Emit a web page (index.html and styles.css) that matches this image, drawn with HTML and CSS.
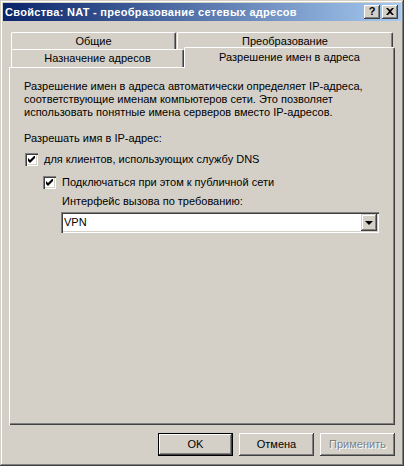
FILE: index.html
```html
<!DOCTYPE html>
<html lang="ru">
<head>
    <meta charset="UTF-8">
    <title>Свойства: NAT</title>
    <link rel="stylesheet" href="styles.css">
</head>
<body>
    <div class="window">
        <div class="titlebar">
            <span class="title">Свойства: NAT - преобразование сетевых адресов</span>
            <div class="caption-buttons">
                <div class="caption-btn help">?</div>
                <div class="caption-btn">
                    <svg width="8" height="7" viewBox="0 0 8 7">
                        <path d="M0 0h2l2 2 2-2h2L5 3.5 8 7H6L4 5 2 7H0l3-3.5z" fill="#000"/>
                    </svg>
                </div>
            </div>
        </div>

        <div class="content">
            <!-- two rows of tabs, the selected one sits in the front row -->
            <div class="tabs">
                <div class="tab-row back">
                    <div class="tab tab-general">Общие</div>
                    <div class="tab tab-translation">Преобразование</div>
                </div>
                <div class="tab-row front">
                    <div class="tab tab-assign">Назначение адресов</div>
                    <div class="tab tab-resolve active">Разрешение имен в адреса</div>
                </div>
            </div>

            <div class="panel">
                <p class="intro">Разрешение имен в адреса автоматически определяет IP-адреса,
                    соответствующие именам компьютеров сети. Это позволяет
                    использовать понятные имена серверов вместо IP-адресов.</p>

                <p class="caption">Разрешать имя в IP-адрес:</p>

                <label class="check first">
                    <span class="box"><svg width="7" height="7" viewBox="0 0 7 7"><path d="M0 2v3l2 2 5-5V-1L2 4z" fill="#000"/></svg></span>
                    для клиентов, использующих службу DNS
                </label>

                <div class="sub">
                    <label class="check">
                        <span class="box"><svg width="7" height="7" viewBox="0 0 7 7"><path d="M0 2v3l2 2 5-5V-1L2 4z" fill="#000"/></svg></span>
                        Подключаться при этом к публичной сети
                    </label>

                    <div class="field">
                        <div class="field-label">Интерфейс вызова по требованию:</div>
                        <div class="combo">
                            <span class="combo-value">VPN</span>
                            <span class="combo-btn"><span class="arrow"></span></span>
                        </div>
                    </div>
                </div>
            </div>

            <div class="buttons">
                <div class="btn default">OK</div>
                <div class="btn">Отмена</div>
                <div class="btn disabled">Применить</div>
            </div>
        </div>
    </div>
</body>
</html>
```

FILE: styles.css
```css
body {
    margin: 0;
    padding: 0;
    font-family: "Liberation Sans", Arial, sans-serif;
    font-size: 11px;
    line-height: 13px;
    color: #000;
    background: #d4d0c8;
}
.window {
    width: 404px;
    height: 466px;
    box-sizing: border-box;
    padding: 3px;
    background: #d4d0c8;
    box-shadow: inset -1px -1px #404040, inset 1px 1px #d4d0c8,
                inset -2px -2px #808080, inset 2px 2px #fff;
    display: flex;
    flex-direction: column;
}
.titlebar {
    height: 18px;
    display: flex;
    align-items: center;
    justify-content: space-between;
    padding-left: 2px;
    background: linear-gradient(to right, #0a246a, #a6caf0);
}
.title {
    color: #fff;
    font-weight: bold;
    font-size: 11px;
    letter-spacing: 0.3px;
}
.caption-buttons {
    display: flex;
    gap: 2px;
    margin-right: 3px;
}
.caption-btn {
    width: 16px;
    height: 14px;
    box-sizing: border-box;
    background: #d4d0c8;
    box-shadow: inset -1px -1px #404040, inset 1px 1px #fff,
                inset -2px -2px #808080, inset 2px 2px #d4d0c8;
    display: flex;
    align-items: center;
    justify-content: center;
    padding-bottom: 1px;
}
.help {
    font-weight: bold;
    font-size: 11px;
    line-height: 11px;
}
.content {
    flex: 1;
    padding: 0 3px 0 6px;
}
.tabs {
    margin-top: 11px;
    margin-left: 2px;
}
.tab-row {
    display: flex;
}
.tab-row.back {
    height: 17px;
}
.tab-row.front {
    height: 18px;
    align-items: flex-end;
}
.tab {
    box-sizing: border-box;
    height: 100%;
    border-top: 1px solid #fff;
    border-left: 1px solid #fff;
    border-right: 1px solid #404040;
    border-radius: 2px 2px 0 0;
    box-shadow: inset -1px 0 #808080;
    background: #d4d0c8;
    text-align: center;
    padding-top: 2px;
}
.tab-general {
    width: 165px;
    margin-right: 1px;
}
.tab-translation {
    width: 216px;
}
.tab-assign {
    width: 173px;
}
.tab-resolve {
    width: 211px;
}
.tab.active {
    position: relative;
    z-index: 1;
    height: 21px;
    margin-bottom: -1px;
    padding-top: 3px;
}
.panel {
    width: 386px;
    height: 358px;
    box-sizing: border-box;
    padding: 13px 0 0 15px;
    box-shadow: inset 1px 1px #fff, inset -1px -1px #404040, inset -2px -2px #808080;
}
.panel p {
    margin: 0;
}
.intro {
    width: 350px;
}
.caption {
    margin-top: 13px !important;
}
.check {
    display: flex;
    align-items: center;
    gap: 6px;
    height: 13px;
}
.check.first {
    margin-top: 8px;
    margin-left: 1px;
}
.box {
    width: 13px;
    height: 13px;
    box-sizing: border-box;
    background: #fff;
    box-shadow: inset 1px 1px #808080, inset 2px 2px #404040,
                inset -1px -1px #fff, inset -2px -2px #d4d0c8;
    display: flex;
    align-items: center;
    justify-content: center;
}
.sub {
    margin-top: 10px;
    margin-left: 19px;
}
.field {
    margin-top: 6px;
    padding-left: 19px;
}
.combo {
    margin-top: 4px;
    margin-left: -1px;
    width: 318px;
    height: 21px;
    box-sizing: border-box;
    padding: 2px;
    background: #fff;
    box-shadow: inset 1px 1px #808080, inset 2px 2px #404040,
                inset -1px -1px #fff, inset -2px -2px #d4d0c8;
    display: flex;
    align-items: center;
    justify-content: space-between;
}
.combo-value {
    padding-left: 1px;
}
.combo-btn {
    width: 16px;
    height: 17px;
    box-sizing: border-box;
    background: #d4d0c8;
    box-shadow: inset -1px -1px #404040, inset 1px 1px #d4d0c8,
                inset -2px -2px #808080, inset 2px 2px #fff;
    display: flex;
    align-items: center;
    justify-content: center;
}
.arrow {
    width: 0;
    height: 0;
    border-left: 4px solid transparent;
    border-right: 4px solid transparent;
    border-top: 4px solid #000;
    margin-right: 1px;
}
.buttons {
    display: flex;
    justify-content: flex-end;
    gap: 6px;
    margin-top: 8px;
    width: 386px;
}
.btn {
    width: 75px;
    height: 23px;
    box-sizing: border-box;
    display: flex;
    align-items: center;
    justify-content: center;
    background: #d4d0c8;
    box-shadow: inset -1px -1px #404040, inset 1px 1px #fff,
                inset -2px -2px #808080, inset 2px 2px #d4d0c8;
}
.btn.default {
    border: 1px solid #000;
    box-shadow: inset -1px -1px #404040, inset 1px 1px #fff,
                inset -2px -2px #808080;
}
.btn.disabled {
    color: #808080;
    text-shadow: 1px 1px #fff;
}
```
